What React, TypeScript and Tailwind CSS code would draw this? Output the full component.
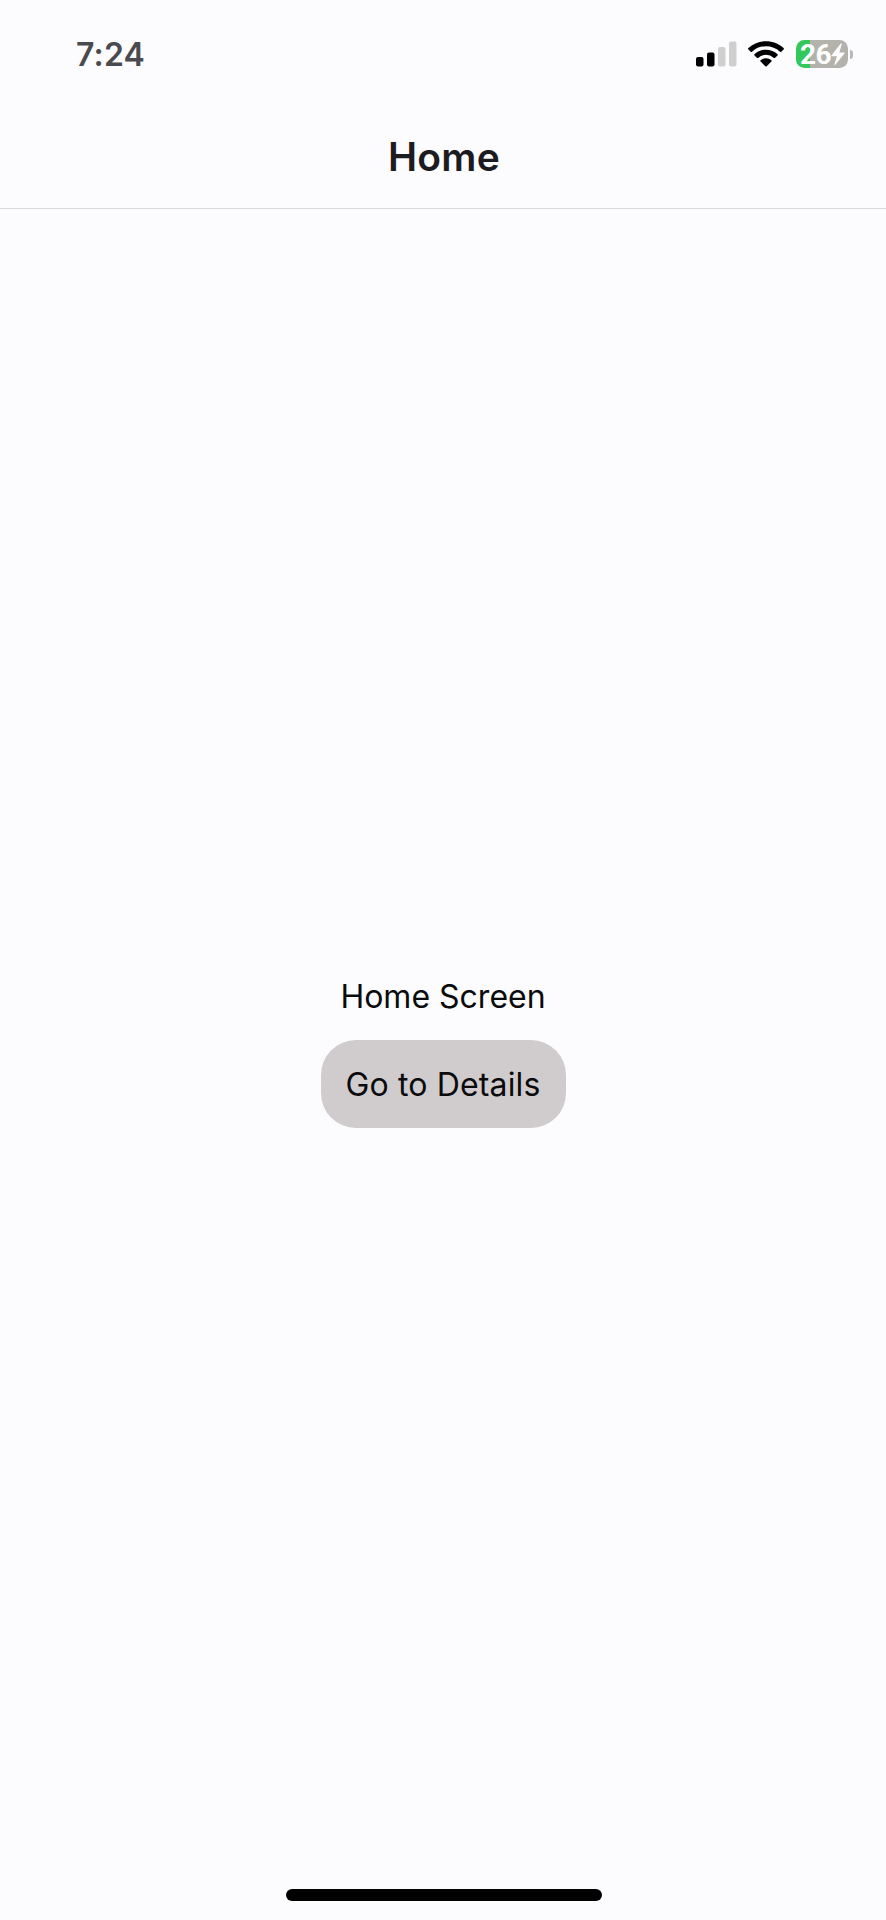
function SignalIcon() {
  return (
    <svg className="h-[26px] w-[41px]" viewBox="0 0 41 26">
      <rect x="0" y="16" width="7.5" height="9.5" rx="2" fill="#000" />
      <rect x="11" y="11.5" width="7.5" height="14" rx="2" fill="#000" />
      <rect x="22" y="6" width="7.5" height="19.5" rx="2" fill="#cfcfcf" />
      <rect x="33" y="0.5" width="7.5" height="25" rx="2" fill="#cfcfcf" />
    </svg>
  );
}

function WifiIcon() {
  return (
    <svg className="ml-[11px] h-[26px] w-9" viewBox="0 0 36 26">
      <path d="M18 .2C11.2.2 5 2.8.4 7.1c-.4.4-.4.9 0 1.300l2.300 2.300c.4.4.9.4 1.300 0A20.400 20.400 0 0 1 18 5.300c5.400 0 10.300 2 14 5.400.4.4.9.4 1.300 0l2.300-2.300c.4-.4.4-.9 0-1.300C31 2.800 24.800.2 18 .2Z" />
      <path d="M18 8.700c-4.400 0-8.500 1.700-11.500 4.500-.4.4-.4.9 0 1.300l2.300 2.300c.4.4.9.4 1.300.1a11.700 11.700 0 0 1 15.800 0c.4.3.9.3 1.300-.1l2.300-2.300c.4-.4.4-.9 0-1.300C26.500 10.400 22.400 8.700 18 8.700Z" />
      <path d="M18 17.200c-2.100 0-4 .8-5.400 2.100-.4.4-.4.9 0 1.300l4.700 4.700c.4.4 1 .4 1.400 0l4.700-4.700c.4-.4.4-.9 0-1.300A7.900 7.900 0 0 0 18 17.200Z" />
    </svg>
  );
}

function Battery() {
  return (
    <div className="ml-[12px] flex items-center">
      <div className="flex h-[28px] w-[52px] items-center rounded-[8.5px] bg-[linear-gradient(to_right,#34c759_13.5px,#b3b2ad_13.5px)] pl-[4px] font-['Roboto',sans-serif] text-[28px] leading-none font-bold tracking-[-0.5px] text-white">
        <span className="w-[31px] pt-px">26</span>
        <svg className="h-[23px] w-[14px] shrink-0" viewBox="0 0 14 23" fill="#fff">
          <path d="M9.600.8.600 12.200c-.4.500-.1 1 .4 1h4.900L3.500 21c-.3 1 .5 1.400 1.100.6l8.900-11.200c.4-.5.1-1-.4-1H8.300l2.400-7.900c.3-.9-.5-1.400-1.100-.7Z" />
        </svg>
      </div>
      <div className="ml-[2px] h-[9px] w-[3px] rounded-r-full bg-[#b9b9b6]" />
    </div>
  );
}

export default function App() {
  return (
    <div className="flex h-[1920px] w-[886px] flex-col bg-[#fcfcff] font-['Inter',sans-serif] text-[#1c1b1f]">
      <div className="flex h-[108px] items-center justify-between pr-[33px] pl-[76px]">
        <time className="pt-[2px] text-[32px] leading-none font-[560] tracking-[0.2px] text-[#4b4a4e]">7:24</time>
        <div className="flex items-center">
          <SignalIcon />
          <WifiIcon />
          <Battery />
        </div>
      </div>
      <header className="flex h-[101px] items-center justify-center border-b border-[#d9d9dc] pb-[4px]">
        <h1 className="pl-[2px] text-[39px] leading-none font-[560] tracking-[0.3px]">Home</h1>
      </header>
      <main className="flex flex-1 flex-col items-center pt-[771px] text-[32px] leading-[34px] text-[#0b0b0d]">
        <p>Home Screen</p>
        <button className="mt-[26px] flex h-[88px] w-[245px] items-center justify-center rounded-[35px] bg-[#d0ccce] pt-px tracking-[0.15px] whitespace-nowrap">
          Go to Details
        </button>
      </main>
      <div className="mb-[19px] ml-px h-[12px] w-[316px] self-center rounded-full bg-black" />
    </div>
  );
}
